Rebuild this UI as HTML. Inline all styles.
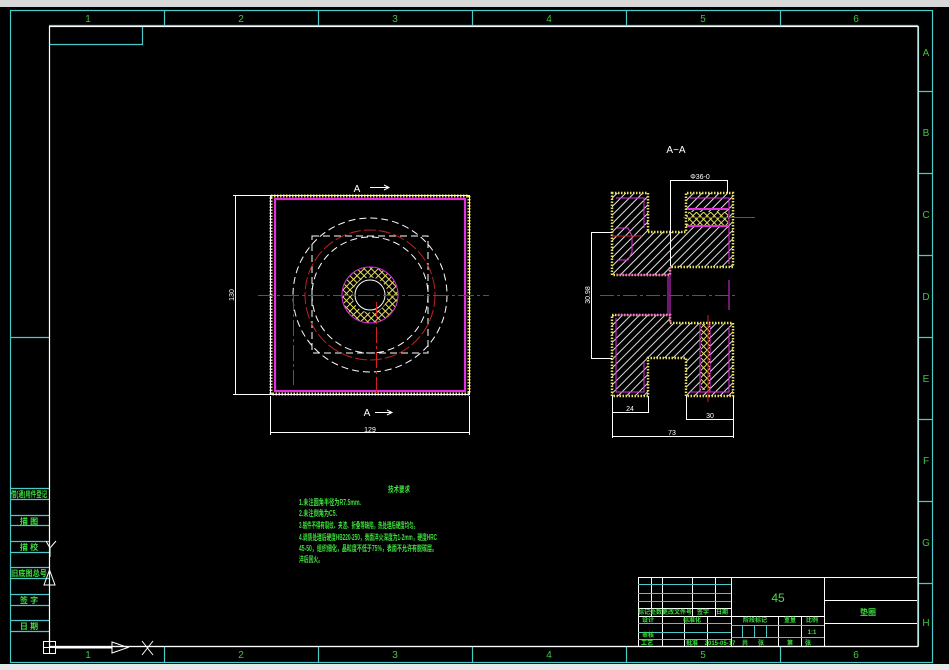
<!DOCTYPE html>
<html><head><meta charset="utf-8"><style>
html,body{margin:0;padding:0;background:#000;}
svg{display:block;}
text{font-family:"Liberation Sans","Noto Sans CJK SC",sans-serif;}
</style></head><body>
<svg width="949" height="670" viewBox="0 0 949 670" xmlns="http://www.w3.org/2000/svg">
<defs>
<pattern id="h" width="6" height="6" patternUnits="userSpaceOnUse" patternTransform="rotate(45)">
<rect width="6" height="6" fill="#000"/><line x1="3" y1="-1" x2="3" y2="7" stroke="#e0e0e0" stroke-width="1"/></pattern>
<pattern id="x" width="5" height="5" patternUnits="userSpaceOnUse" patternTransform="rotate(45)">
<rect width="5" height="5" fill="#000"/><path d="M2.5 -1V6M-1 2.5H6" stroke="#e8e060" stroke-width="1"/></pattern>
</defs>
<rect width="949" height="670" fill="#000"/>
<rect x="0" y="0" width="949" height="7" fill="#d8d8d8"/>
<rect x="0" y="664" width="949" height="6" fill="#e8e8e8"/>
<g stroke="#4cc8c8" stroke-width="1.2" fill="none">
<rect x="10.5" y="10.5" width="922" height="652"/>
<line x1="49" y1="25.5" x2="918" y2="25.5"/>
<line x1="49" y1="646.5" x2="918" y2="646.5"/>
<line x1="918.5" y1="26" x2="918.5" y2="646"/>
<path d="M164.5 10V26M318.5 10V26M472.5 10V26M626.5 10V26M780.5 10V26"/>
<path d="M164.5 646V662M318.5 646V662M472.5 646V662M626.5 646V662M780.5 646V662"/>
<path d="M918 91.5H933M918 173.5H933M918 255.5H933M918 337.5H933M918 419.5H933M918 501.5H933M918 583.5H933"/>
<path d="M10 337.5H49"/>
<path d="M50 44.5H142.5V26"/>
<path d="M10 488.5H49M10 499.5H49M10 515.5H49M10 525.5H49M10 541.5H49M10 552.5H49M10 567.5H49M10 578.5H49M10 594.5H49M10 605.5H49M10 620.5H49M10 631.5H49"/>
</g>
<rect x="49.5" y="26.5" width="868.5" height="620" fill="none" stroke="#fff" stroke-width="1.2"/>
<g fill="#3ec83e" font-size="10" text-anchor="middle">
<text x="88" y="22">1</text><text x="241" y="22">2</text><text x="395" y="22">3</text><text x="549" y="22">4</text><text x="703" y="22">5</text><text x="856" y="22">6</text>
<text x="88" y="658">1</text><text x="241" y="658">2</text><text x="395" y="658">3</text><text x="549" y="658">4</text><text x="703" y="658">5</text><text x="856" y="658">6</text>
<text x="926" y="56">A</text><text x="926" y="136">B</text><text x="926" y="218">C</text><text x="926" y="300">D</text><text x="926" y="382">E</text><text x="926" y="464">F</text><text x="926" y="546">G</text><text x="926" y="626">H</text>
</g>
<g fill="#3ee03e" font-size="8" font-weight="bold" text-anchor="middle">
<text x="29" y="497" textLength="36" lengthAdjust="spacingAndGlyphs">借(通)用件登记</text>
<text x="29" y="524">描 图</text><text x="29" y="550">描 校</text>
<text x="29" y="576" textLength="36" lengthAdjust="spacingAndGlyphs">旧底图总号</text>
<text x="29" y="603">签 字</text><text x="29" y="629">日 期</text>
</g>
<g stroke="#fff" fill="none" stroke-width="1">
<rect x="43.5" y="641.5" width="12" height="12"/><path d="M49.5 641.5V653.5M43.5 647.5H55.5"/>
<path d="M55 647.5H112" stroke-width="2"/>
<path d="M112 642L128 647.5L112 653Z"/>
<path d="M142 641L153 655M153 641L142 655"/>
<path d="M49.5 641V590"/>
<path d="M44 585L49.5 570L55 585Z"/>
<path d="M46 541L50 548L56 541M50 548V557"/>
</g>
<g fill="none">
<rect x="271" y="196" width="198" height="198" stroke="#e8e060" stroke-width="3" stroke-dasharray="1.5 1.5"/>
<rect x="270.5" y="195.5" width="199" height="199" stroke="#fff" stroke-width="1"/>
<rect x="275" y="199" width="190" height="192" stroke="#e030e0" stroke-width="2.2"/>
<g stroke="#fff" stroke-width="1" stroke-dasharray="7 4">
<circle cx="370" cy="295" r="77"/><circle cx="370" cy="295" r="58"/>
<rect x="312" y="236" width="116" height="117"/>
</g>
<circle cx="370" cy="295" r="65" stroke="#c02020" stroke-width="1" stroke-dasharray="12 3"/>
<circle cx="370" cy="295" r="22.5" stroke="url(#x)" stroke-width="10"/>
<circle cx="370" cy="295" r="28" stroke="#e030e0" stroke-width="1"/>
<circle cx="370" cy="295" r="15" stroke="#fff" stroke-width="1"/>
<g stroke="#d02020" stroke-width="1" stroke-dasharray="16 3 3 3">
<path d="M258 295.5H489M376.5 302V395M293.5 295V385"/>
</g>
<g stroke="#fff" stroke-width="1">
<path d="M235.5 195V395M233 195.5H270M233 394.5H270M270.5 396V435M469.5 396V435M270 432.5H470"/>
<path d="M370 187.5H388M384 185L389 187.5L384 190"/>
<path d="M375 412.5H392M387 410L392 412.5L387 415"/>
</g>
</g>
<g fill="#fff" font-size="10" text-anchor="middle">
<text x="357" y="192">A</text><text x="367" y="416">A</text>
<text x="370" y="432" font-size="7">129</text>
<text x="234" y="295" font-size="7" transform="rotate(-90 234 295)">130</text>
<text x="676" y="153" font-size="10">A−A</text>
</g>
<g>
<path d="M612 193H648V232H686V193H733V267H670V275H612Z" fill="url(#h)" stroke="#e8e060" stroke-width="2.5" stroke-dasharray="1.5 1.5"/>
<path d="M612 315H670V323H733V396H686V358H648V396H612Z" fill="url(#h)" stroke="#e8e060" stroke-width="2.5" stroke-dasharray="1.5 1.5"/>
<g stroke="#e030e0" stroke-width="1" fill="none">
<path d="M616 198H644V228M690 198H729V264"/>
<path d="M616 318V392H644V362M729 327V392H690"/>
<path d="M617 228H628L632 236V252L628 260H617" />
<path d="M687 209H728M687 226H728" stroke-width="2"/>
<path d="M617 275H668V315H617M670 267V323M729 280V310"/>
<path d="M700 323V392M710 323V392"/>
</g>
<rect x="701" y="324" width="9" height="66" fill="url(#x)"/>
<rect x="688" y="212" width="40" height="13" fill="url(#x)"/>
<g stroke="#d02020" stroke-width="1" fill="none">
<path d="M600 295.5H738" stroke-dasharray="14 3 3 3"/>
<path d="M683 217.5H755M708 315V402M612 236H642"/>
</g>
<g stroke="#fff" stroke-width="1" fill="none">
<path d="M670.5 180V266M727.5 180V193M670 180.5H728"/>
<path d="M591.5 232V358M591 232.5H612M591 358.5H612"/>
<path d="M612.5 396V438M648.5 396V413M612 412.5H649"/>
<path d="M686.5 396V420M733.5 396V438M686 419.5H734M612 436.5H734"/>
</g>
<g fill="#fff" font-size="7" text-anchor="middle">
<text x="700" y="179">Φ36-0</text>
<text x="630" y="411">24</text><text x="710" y="418">30</text><text x="672" y="435">73</text>
<text x="590" y="295" transform="rotate(-90 590 295)">30.98</text>
</g>
</g>
<g fill="#3ee03e" font-size="8" font-weight="bold">
<text x="388" y="492" textLength="22" lengthAdjust="spacingAndGlyphs">技术要求</text>
<text x="299" y="505" textLength="62" lengthAdjust="spacingAndGlyphs">1.未注圆角半径为R7.5mm.</text>
<text x="299" y="516" textLength="38" lengthAdjust="spacingAndGlyphs">2.未注倒角为C5.</text>
<text x="299" y="528" textLength="119" lengthAdjust="spacingAndGlyphs">3.锻件不得有裂纹、夹渣、折叠等缺陷，热处理后硬度均匀。</text>
<text x="299" y="540" textLength="138" lengthAdjust="spacingAndGlyphs">4.调质处理后硬度HB220-250，表面淬火深度为1-2mm，硬度HRC</text>
<text x="299" y="551" textLength="138" lengthAdjust="spacingAndGlyphs">45-50，组织细化，晶粒度不低于75%，表面不允许有脱碳层。</text>
<text x="299" y="562" textLength="24" lengthAdjust="spacingAndGlyphs">淬后回火。</text>
</g>
<g stroke="#fff" stroke-width="1" fill="none">
<path d="M638.5 577.5H917M638.5 577V646M731.5 577V646M824.5 577V646M651.5 577V616M662.5 577V646M692.5 577V616M715.5 577V616M684.5 616V646M707.5 616V646"/>
<path d="M638 608.5H731M638 616.5H824M824 600.5H917M824 623.5H917M778.5 616V646M801.5 616V646"/>
</g>
<g stroke="#4cc8c8" stroke-width="1" fill="none">
<path d="M638 584.5H731M638 593.5H731M638 601.5H731M638 623.5H731M638 632.5H731M638 639.5H731"/>
<path d="M731 625.5H824M731 637.5H824M742.5 625V637M754.5 625V637M766.5 625V637"/>
</g>
<g fill="#3ee03e" font-size="6" font-weight="bold" text-anchor="middle">
<text x="778" y="602" font-size="12" font-weight="normal">45</text>
<text x="868" y="615" font-size="8">垫圈</text>
<text x="644" y="614">标记</text><text x="656" y="614">处数</text><text x="677" y="614">更改文件号</text><text x="703" y="614">签字</text><text x="722" y="614">日期</text>
<text x="648" y="622">设计</text><text x="692" y="622">标准化</text>
<text x="648" y="637">审核</text><text x="692" y="645">批准</text>
<text x="647" y="645">工艺</text><text x="720" y="645">2015-05-17</text>
<text x="755" y="622">阶段标记</text><text x="790" y="622">重量</text><text x="812" y="622">比例</text>
<text x="812" y="634">1:1</text>
<text x="745" y="645">共</text><text x="761" y="645">张</text><text x="790" y="645">第</text><text x="808" y="645">张</text>
</g>
</svg>
</body></html>
